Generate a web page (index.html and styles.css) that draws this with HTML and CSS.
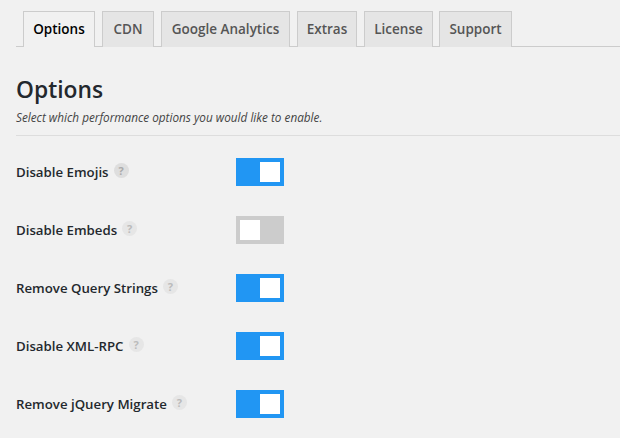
FILE: index.html
```html
<!DOCTYPE html>
<html>
<head>
    <link rel="stylesheet" href="styles.css">
</head>
<body>
    <div class="tabs">
        <a class="tab active tab-options">Options</a>
        <a class="tab tab-cdn">CDN</a>
        <a class="tab tab-ga">Google Analytics</a>
        <a class="tab tab-extras">Extras</a>
        <a class="tab tab-license">License</a>
        <a class="tab tab-support">Support</a>
    </div>
    <div class="section-head">
        <h2>Options</h2>
        <p>Select which performance options you would like to enable.</p>
    </div>
    <div class="rows">
        <div class="row">
            <div class="label"><span>Disable Emojis</span><i class="help">?</i></div>
            <div class="toggle on"><b></b></div>
        </div>
        <div class="row">
            <div class="label"><span>Disable Embeds</span><i class="help faded">?</i></div>
            <div class="toggle"><b></b></div>
        </div>
        <div class="row">
            <div class="label"><span>Remove Query Strings</span><i class="help faded">?</i></div>
            <div class="toggle on"><b></b></div>
        </div>
        <div class="row">
            <div class="label"><span>Disable XML-RPC</span><i class="help faded">?</i></div>
            <div class="toggle on"><b></b></div>
        </div>
        <div class="row">
            <div class="label"><span>Remove jQuery Migrate</span><i class="help faded">?</i></div>
            <div class="toggle on"><b></b></div>
        </div>
    </div>
</body>
</html>
```

FILE: styles.css
```css
html, body { height: 100%; overflow: hidden; }
body { background-color: #f1f1f1; color: #23282d; font-family: 'Open Sans', sans-serif; margin: 0; padding: 11px 0 0 16px; box-sizing: border-box; }

.tabs { display: flex; padding-left: 7px; border-bottom: 1px solid #ccc; height: 35px; }
.tab { box-sizing: border-box; height: 36px; border: 1px solid #ccc; border-bottom: none; background-color: #e5e5e5; color: #555; font-size: 13.5px; font-weight: 600; line-height: 35px; text-align: center; margin-right: 7px; }
.tab.active { background-color: #f1f1f1; color: #000; }
.tab-options { width: 72px; }
.tab-cdn { width: 52px; }
.tab-ga { width: 129px; }
.tab-extras { width: 60px; }
.tab-license { width: 69px; margin-right: 6px; }
.tab-support { width: 73px; }

.section-head { margin-top: 27px; height: 61px; border-bottom: 1px solid #ddd; }
h2 { margin: 0; font-size: 22.8px; font-weight: 600; line-height: 32px; color: #23282d; }
p { margin: 3px 0 0; font-size: 11.75px; font-style: italic; line-height: 16px; color: #444; }

.rows { display: flex; flex-direction: column; gap: 30px; padding-top: 22px; }
.row { display: flex; align-items: center; height: 28px; }
.label { width: 220px; display: flex; align-items: center; font-size: 13.25px; font-weight: 600; color: #23282d; }
.help { width: 15px; height: 15px; margin: -3px 0 0 5px; border-radius: 50%; background-color: #dedede; color: #aaa; font-size: 11px; font-style: normal; font-weight: 700; line-height: 15px; text-align: center; }
.help.faded { background-color: #e6e6e6; color: #bbb; }

.toggle { width: 48px; height: 28px; padding: 4px; box-sizing: border-box; background-color: #ccc; display: flex; }
.toggle b { width: 20px; height: 20px; background-color: #fff; display: block; }
.toggle.on { background-color: #2196f3; justify-content: flex-end; }
```
